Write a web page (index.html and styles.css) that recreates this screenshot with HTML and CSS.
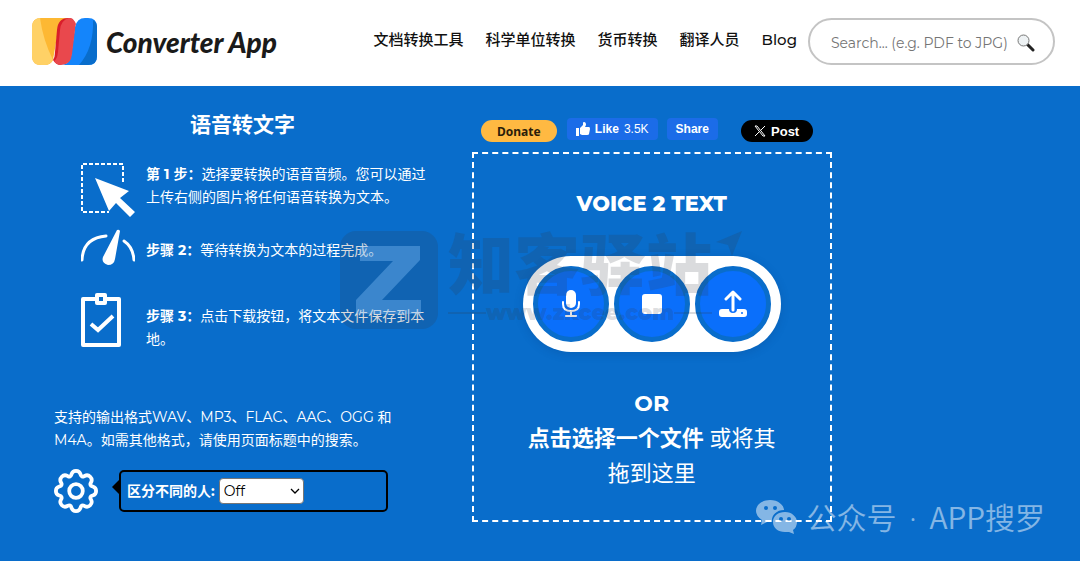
FILE: index.html
```
<!DOCTYPE html>
<html lang="zh-CN">
  <head>
    <meta charset="UTF-8" />
    <meta name="viewport" content="width=device-width, initial-scale=1.0" />
    <title>Converter App - 语音转文字</title>
    <link rel="stylesheet" href="styles.css">
  </head>
  <body>
    <header class="header">
      <a class="logo" href="#">
        <svg class="logo-mark" viewBox="0 0 65 47" aria-hidden="true">
          <path fill="#fdb833" d="M9 0h27q-8 1-10 13L21 42q-2 5-9 5H9q-9 0-9-9V9q0-9 9-9z" />
          <path fill="#ffd166" d="M8 0Q0 1 0 9v29q0 9 9 9h4q5 0 8-5Q11 22 8 0z" />
          <path fill="#1485fb" d="M56 0q9 0 9 9v29q0 9-9 9H28q9 0 11-9l4-29Q45 0 53 0z" />
          <path fill="#096dcb" d="M61 2q4 2 4 7v29q0 9-9 9h-9Q62 30 61 2z" />
          <path fill="#d91e2a" d="M36 0q-10 0-11 12l-2 22q0 5-2 8 3 5 8 5L41 1q-2-1-5-1z" />
          <path fill="#e9484d" d="M37 0q-8 2-9 12l-2 22q-1 8-4 9 2 4 7 4 10 0 11-11l3-24q0-4 1-6-2-6-7-6z" />
        </svg>
        <span class="logo-text">Converter App</span>
      </a>
      <nav class="nav">
        <a href="#">文档转换工具</a>
        <a href="#">科学单位转换</a>
        <a href="#">货币转换</a>
        <a href="#">翻译人员</a>
        <a href="#">Blog</a>
      </nav>
      <form class="search">
        <input type="text" aria-label="Search" placeholder="Search... (e.g. PDF to JPG)" />
        <button type="button" aria-label="Search">
          <svg viewBox="0 0 18 18" aria-hidden="true">
            <path d="M10 10l6 6" stroke="#222" stroke-width="3" stroke-linecap="round" />
            <circle cx="6.500" cy="6.500" r="5.500" fill="#eef2f4" stroke="#777" stroke-width="1" />
          </svg>
        </button>
      </form>
    </header>

    <main class="main">
      <section class="info">
        <h1>语音转文字</h1>
        <ul class="steps">
          <li class="step-select">
            <svg viewBox="0 0 54 54" aria-hidden="true">
              <path d="M42 19V1H1v48h27" fill="none" stroke="#fff" stroke-width="2" stroke-dasharray="4 2" />
              <path d="M14 15l34 13-9 7 15 14-5 5-14-14-7 8z" fill="#fff" />
            </svg>
            <p><strong>第 1 步：</strong>选择要转换的语音音频。您可以通过上传右侧的图片将任何语音转换为文本。</p>
          </li>
          <li class="step-wait">
            <svg viewBox="0 0 54 37" aria-hidden="true">
              <path d="M1 31Q2 9 25 7M43 12q9 6 10 19" fill="none" stroke="#fff" stroke-width="3" stroke-linecap="round" />
              <path d="M36 1q2-1 3 1l-5 28q-1 6-7 6-7-2-5-8z" fill="#fff" />
            </svg>
            <p><strong>步骤 2：</strong>等待转换为文本的过程完成。</p>
          </li>
          <li class="step-download">
            <svg viewBox="0 0 54 54" aria-hidden="true">
              <path d="M2 6h36v46H2z" fill="none" stroke="#fff" stroke-width="4" stroke-linejoin="round" />
              <rect x="14" y="0" width="12" height="12" rx="2" fill="#fff" />
              <rect x="18" y="4" width="4" height="4" fill="#096dcb" />
              <path d="M10 31l7 6 15-14" fill="none" stroke="#fff" stroke-width="4" />
            </svg>
            <p><strong>步骤 3：</strong>点击下载按钮，将文本文件保存到本地。</p>
          </li>
        </ul>
        <p class="formats">支持的输出格式WAV、MP3、FLAC、AAC、OGG 和 M4A。如需其他格式，请使用页面标题中的搜索。</p>
        <div class="settings">
          <svg viewBox="-0.75 -0.75 17.5 17.5" aria-hidden="true">
            <path d="M9.796 1.343c-.527-1.790-3.065-1.790-3.592 0l-.094.319a.873.873 0 0 1-1.255.520l-.292-.160c-1.640-.892-3.433.902-2.540 2.541l.159.292a.873.873 0 0 1-.520 1.255l-.319.094c-1.790.527-1.790 3.065 0 3.592l.319.094a.873.873 0 0 1 .520 1.255l-.160.292c-.892 1.640.901 3.434 2.541 2.540l.292-.159a.873.873 0 0 1 1.255.520l.094.319c.527 1.790 3.065 1.790 3.592 0l.094-.319a.873.873 0 0 1 1.255-.520l.292.160c1.640.893 3.434-.902 2.540-2.541l-.159-.292a.873.873 0 0 1 .520-1.255l.319-.094c1.790-.527 1.790-3.065 0-3.592l-.319-.094a.873.873 0 0 1-.520-1.255l.160-.292c.893-1.640-.902-3.433-2.541-2.540l-.292.159a.873.873 0 0 1-1.255-.520z" />
            <circle cx="8" cy="8" r="2.700" />
          </svg>
          <div class="option">
            <label for="speakers">区分不同的人:</label>
            <select id="speakers">
              <option>Off</option>
              <option>On</option>
            </select>
          </div>
        </div>
      </section>

      <section class="convert">
        <div class="social">
          <button class="donate" type="button">Donate</button>
          <div class="facebook">
            <button type="button">
              <svg viewBox="0 0 14 14" aria-hidden="true">
                <path d="M0 6h3v8H0zM4 6l3-3V1q0-1 1-1 2 0 2 3L9 5h4q1 0 1 2l-1 5q0 1-2 1H6l-2-1z" />
              </svg>
              Like <span>3.5K</span>
            </button>
            <button type="button">Share</button>
          </div>
          <button class="post" type="button">
            <svg viewBox="0 0 12 12" aria-hidden="true">
              <path d="M1 1h2l8 10H9zM11 1L7 5M5 7l-4 4" />
            </svg>
            Post
          </button>
        </div>
        <div class="dropzone">
          <h2>VOICE 2 TEXT</h2>
          <div class="recorder">
            <button type="button" aria-label="Record">
              <svg viewBox="0 0 28 28" aria-hidden="true">
                <rect x="9" y="0" width="10" height="18" rx="5" />
                <path d="M6 12v2q0 7 8 7t8-7v-2M14 21v5M9 26h10" fill="none" stroke="#fff" stroke-width="2" stroke-linecap="round" />
              </svg>
            </button>
            <button type="button" aria-label="Stop">
              <svg viewBox="0 0 28 28" aria-hidden="true">
                <rect x="4" y="4" width="20" height="20" rx="3" />
              </svg>
            </button>
            <button type="button" aria-label="Upload">
              <svg viewBox="0 0 28 28" aria-hidden="true">
                <path d="M3 19h7q0 4 4 4t4-4h7q3 0 3 3v2q0 3-3 3H3q-3 0-3-3v-2q0-3 3-3z" />
                <path d="M14 20V3M7 9l7-7 7 7" fill="none" stroke="#fff" stroke-width="3" stroke-linecap="round" stroke-linejoin="round" />
                <circle cx="23" cy="23" r="1" fill="#0a6ffb" />
              </svg>
            </button>
          </div>
          <p class="drop-text">
            <strong>OR</strong><br />
            <strong>点击选择一个文件</strong> 或将其<br />拖到这里
          </p>
        </div>
      </section>

      <div class="site-mark" aria-hidden="true">
        <svg viewBox="0 0 98 98">
          <rect width="98" height="98" rx="16" fill="#323740" fill-opacity="0.18" />
          <path d="M20 15h60v14L42 69h39v14H16V69l37-39H20z" fill="#8cc8ff" fill-opacity="0.35" />
        </svg>
        <div class="site-mark-text">
          <span class="site-name">知客驿站</span>
          <span class="site-url">www.zkcee.com</span>
        </div>
        <svg class="site-arrow" viewBox="0 0 26 26">
          <path d="M26 0L16 25l-4-11L0 11z" />
        </svg>
      </div>

      <div class="account" aria-hidden="true">
        <svg viewBox="0 0 42 34">
          <path d="M14 0c8 0 14 5 14 10-8 0-13 6-12 12h-5l-6 3 1-5q-6-4-6-9C0 5 6 0 14 0z" />
          <path d="M29 12c7 0 12 5 12 10q0 5-4 8l1 4-5-2h-4c-7 0-12-4-12-10s5-10 12-10z" />
          <g fill="#096dcb">
            <circle cx="10" cy="8" r="2" />
            <circle cx="19" cy="8" r="2" />
            <circle cx="25" cy="19" r="2" />
            <circle cx="33" cy="19" r="2" />
          </g>
        </svg>
        <p>公众号<span> · </span>APP搜罗</p>
      </div>
    </main>
  </body>
</html>
```
FILE: styles.css
```
* {
  box-sizing: border-box;
}

body {
  margin: 0;
  min-height: 100vh;
  display: flex;
  flex-direction: column;
  background-color: #fff;
  color: #fff;
  font-family: Montserrat, Inter, "Noto Sans CJK SC", sans-serif;
  font-size: 14px;
  line-height: 23px;
}

h1,
h2,
p,
ul {
  margin: 0;
  padding: 0;
}

button,
input,
select {
  font-family: inherit;
}

button {
  border: none;
  cursor: pointer;
}

/* header */
.header {
  display: flex;
  align-items: center;
  padding: 18px 25px 21px 32px;
}

.logo {
  display: flex;
  align-items: center;
  gap: 9px;
  color: #1a1a1a;
  text-decoration: none;
}

.logo-mark {
  width: 65px;
  height: 47px;
}

.logo-text {
  font-family: Lato, sans-serif;
  font-size: 28px;
  font-weight: 900;
  font-style: italic;
  line-height: 32px;
  white-space: nowrap;
}

.nav {
  display: flex;
  gap: 22px;
  margin-left: auto;
  padding-bottom: 4px;
  font-size: 15px;
  font-weight: 500;
  white-space: nowrap;
}

.nav a {
  color: #111;
  text-decoration: none;
}

.search {
  display: flex;
  align-items: center;
  width: 247px;
  height: 47px;
  margin-left: 11px;
  padding: 2px 18px 0 21px;
  border: 2px solid #c4c4c4;
  border-radius: 24px;
}

.search input {
  flex: 1;
  min-width: 0;
  padding: 0;
  border: none;
  outline: none;
  background: transparent;
  font-size: 14px;
}

.search input::placeholder {
  color: #757575;
}

.search button {
  display: flex;
  padding: 0;
  background: none;
}

.search svg {
  width: 18px;
  height: 18px;
}

/* main */
.main {
  position: relative;
  flex: 1;
  display: grid;
  grid-template-columns: 22fr 21fr;
  gap: 41px;
  align-items: start;
  padding: 24px 23% 39px 5%;
  background-color: #096dcb;
}

.info h1 {
  font-size: 21px;
  line-height: 30px;
  text-align: center;
}

.steps {
  display: flex;
  flex-direction: column;
  gap: 12px;
  padding: 23px 0 0 27px;
  list-style: none;
}

.steps li {
  display: flex;
  align-items: center;
  gap: 11px;
}

.steps .step-select {
  align-items: flex-start;
}

.step-wait p {
  padding-top: 6px;
}

.step-download {
  margin-top: 11px;
}

.step-download p {
  padding-top: 16px;
}

.steps svg {
  flex: none;
  width: 54px;
}

.formats {
  max-width: 340px;
  margin-top: 55px;
}

.settings {
  display: flex;
  align-items: center;
  gap: 21px;
  margin-top: 17px;
}

.settings svg {
  width: 44px;
  height: 44px;
  fill: none;
  stroke: #fff;
  stroke-width: 1.5;
  stroke-linejoin: round;
}

.option {
  position: relative;
  display: flex;
  align-items: center;
  gap: 4px;
  width: 269px;
  height: 42px;
  padding: 0 6px;
  border: 2px solid #000;
  border-radius: 5px;
  font-weight: bold;
}

.option::before {
  content: "";
  position: absolute;
  top: 7px;
  left: -9px;
  border: 8px solid transparent;
  border-right-color: #000;
  border-left: none;
}

.option select {
  appearance: none;
  width: 85px;
  height: 26px;
  padding: 0 4px;
  border: 1px solid #767676;
  border-radius: 4px;
  background: #fff url("data:image/svg+xml,%3Csvg xmlns='http://www.w3.org/2000/svg' viewBox='0 0 10 6'%3E%3Cpath d='M1 1l4 4 4-4' fill='none' stroke='%23000' stroke-width='1.3'/%3E%3C/svg%3E") no-repeat right 3px center / 10px 6px;
  color: #000;
  font-size: 14px;
}

/* share buttons */
.social {
  display: flex;
  align-items: center;
  padding: 8px 19px 8px 9px;
  font-family: "Liberation Sans", Arial, sans-serif;
}

.social button {
  display: flex;
  align-items: center;
  justify-content: center;
  gap: 5px;
  height: 22px;
  padding: 0 9px;
  border-radius: 4px;
  background-color: #1b6ce8;
  color: #fff;
  font-size: 12px;
  font-weight: bold;
}

.social .donate {
  width: 76px;
  border-radius: 11px;
  background-color: #ffb942;
  color: #2b1d0a;
  font-family: "Noto Sans", sans-serif;
}

.facebook {
  display: flex;
  gap: 9px;
  margin: 0 auto 4px 10px;
}

.facebook svg {
  width: 14px;
  height: 14px;
  fill: #fff;
}

.facebook span {
  font-weight: normal;
}

.social .post {
  width: 72px;
  border-radius: 11px;
  background-color: #000;
  font-size: 13px;
}

.post svg {
  width: 12px;
  height: 12px;
  fill: none;
  stroke: #fff;
}

/* drop area */
.dropzone {
  display: flex;
  flex-direction: column;
  align-items: center;
  padding: 35px 20px 29px;
  border: 2px dashed #fff;
  text-align: center;
}

.dropzone h2 {
  font-size: 21px;
  font-weight: 800;
  line-height: 30px;
}

.recorder {
  display: flex;
  gap: 5px;
  margin: 37px 0 34px;
  padding: 10px;
  border-radius: 48px;
  background-color: #fff;
  box-shadow: 0 2px 10px rgba(0, 50, 110, 0.2);
}

.recorder button {
  display: flex;
  align-items: center;
  justify-content: center;
  width: 76px;
  height: 76px;
  border: 5px solid #096dcb;
  border-radius: 50%;
  background-color: #0a6ffb;
}

.recorder svg {
  flex: none;
  width: 28px;
  height: 28px;
  fill: #fff;
}

.drop-text {
  font-size: 22px;
  line-height: 35px;
}

/* marks over the page */
.site-mark {
  position: absolute;
  top: 145px;
  left: 340px;
  display: flex;
  gap: 10px;
  pointer-events: none;
}

.site-mark svg {
  width: 98px;
  height: 98px;
}

.site-mark .site-arrow {
  position: absolute;
  top: 0;
  right: -30px;
  width: 26px;
  height: 26px;
  fill: rgba(50, 55, 64, 0.18);
}

.site-mark-text {
  display: flex;
  flex-direction: column;
  align-items: center;
  color: rgba(50, 55, 64, 0.18);
  font-weight: 900;
  white-space: nowrap;
}

.site-name {
  font-size: 66px;
  line-height: 70px;
}

.site-url {
  display: flex;
  align-items: center;
  width: 100%;
  font-size: 21px;
}

.site-url::before,
.site-url::after {
  content: "";
  flex: 1;
  height: 2px;
  background-color: rgba(50, 55, 64, 0.18);
}

.account {
  position: absolute;
  right: 35px;
  bottom: 22px;
  display: flex;
  align-items: center;
  gap: 8px;
  color: #fff;
  font-family: "Noto Sans CJK SC", sans-serif;
  font-size: 30px;
  font-weight: 350;
  line-height: 42px;
  opacity: 0.5;
  white-space: nowrap;
  pointer-events: none;
}

.account span {
  padding: 0 5px;
  font-family: "Noto Sans", sans-serif;
}

.account svg {
  width: 42px;
  height: 34px;
  fill: #fff;
}
```
